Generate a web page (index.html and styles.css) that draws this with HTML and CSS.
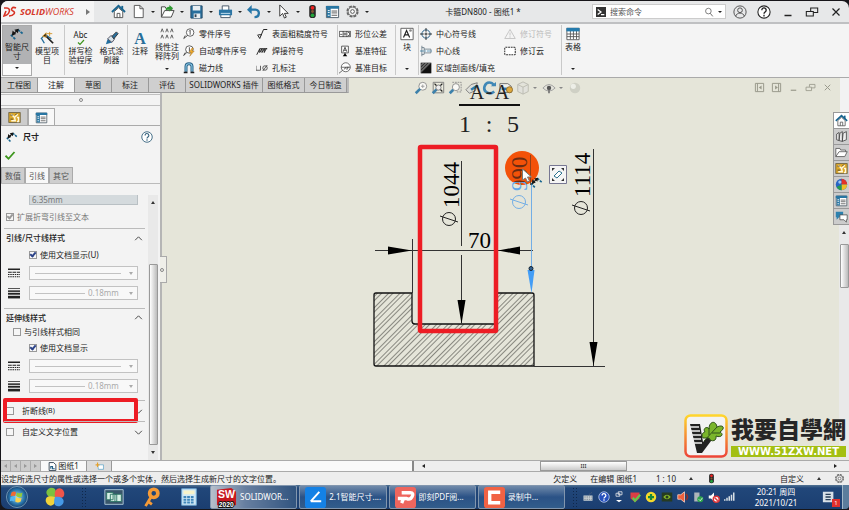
FILE: index.html
```
<!DOCTYPE html>
<html lang="zh-CN">
<head>
<meta charset="utf-8">
<title>卡箍DN800 - 图纸1</title>
<link rel="stylesheet" href="styles.css">
</head>
<body>
<svg class="sprite" aria-hidden="true">
  <symbol id="home" viewBox="0 0 16 16"><path d="M3.5 8v6.500h9V8L8 4z" fill="#fff" stroke="#555"/><path d="M6.500 14.500V10h3v4.500" fill="none" stroke="#555"/><path d="M1 8.500L8 2l7 6.500" fill="none" stroke="#17648f" stroke-width="2"/><path d="M12 2v4" stroke="#17648f" stroke-width="2"/></symbol>
  <symbol id="doc" viewBox="0 0 16 16"><path d="M3.500 1.500h6l3.500 3.500v9.500H3.500z" fill="#fff" stroke="#555"/><path d="M9.500 1.500V5H13" fill="none" stroke="#555"/></symbol>
  <symbol id="open" viewBox="0 0 16 16"><path d="M1.500 14V3h4l1 2h6v3" fill="#f6f6f6" stroke="#444"/><path d="M1.500 14L5 7h10l-3 7z" fill="#fff" stroke="#444"/><path d="M6 7c0-3 2-4 4-4V1l4 3.500L10 8V6C8 6 7 6 6 7z" fill="#2e9a32"/></symbol>
  <symbol id="save" viewBox="0 0 16 16"><path d="M2 2h12v13H2z" fill="#286f9d" stroke="#234b69"/><path d="M4 2h8v5H4zM5 10h7v5H5z" fill="#e8eef2"/><path d="M6 11h2v3H6z" fill="#345"/></symbol>
  <symbol id="print" viewBox="0 0 16 16"><path d="M4.500 2h7v5h-7zM3 11h10v3.500H3z" fill="#fff" stroke="#456"/><path d="M1 6h14v6H1z" fill="#2b75a4"/><path d="M3 10h10" stroke="#c7e2f1"/></symbol>
  <symbol id="undo" viewBox="0 0 16 16"><path d="M3 6h6c5 0 5 8-1 8" fill="none" stroke="#2877a8" stroke-width="2.500"/><path d="M0 6l5-5v10z" fill="#2877a8"/></symbol>
  <symbol id="pointer" viewBox="0 0 16 16"><path d="M4 1v12l3-3 2 5 2-1-2-4h4z" fill="#fff" stroke="#333"/></symbol>
  <symbol id="traffic" viewBox="0 0 16 16"><rect x="4.500" y="1" width="7" height="14" rx="3" fill="#292929"/><circle cx="8" cy="4" r="2" fill="#e22"/><circle cx="8" cy="8" r="1.500" fill="#853"/><circle cx="8" cy="12" r="2" fill="#23a43b"/></symbol>
  <symbol id="list" viewBox="0 0 16 16"><path d="M1.500 2.500h13v12h-13z" fill="#fff" stroke="#4d5c66"/><path d="M1 2h14v3H1zM2 5h4v9H2z" fill="#2876a3"/><path d="M3 7h2M3 9h2M3 12h2" stroke="#fff"/><path d="M7 7.500h6M7 9.500h6M7 12h6" stroke="#555"/></symbol>
  <symbol id="gear" viewBox="0 0 16 16"><circle cx="8" cy="8" r="5.500" fill="none" stroke="#666" stroke-width="2" stroke-dasharray="3 1.300"/><circle cx="8" cy="8" r="4.700" fill="#eee" stroke="#666"/><circle cx="8" cy="8" r="2" fill="#fff" stroke="#555"/></symbol>
  <symbol id="smart" viewBox="0 0 16 16"><path d="M1 9l5 5M9 3l6 5" fill="none" stroke="#17658f" stroke-width="2" stroke-dasharray="3 1"/><path d="M3 9l6-6" stroke="#151515" stroke-width="1.500"/><path d="M2 10l1-6 4 4zM10 2L5 3l4 4z" fill="#151515"/></symbol>
  <symbol id="wand" viewBox="0 0 16 16"><path d="M1 9l5-5 7 5M2 9l3 5" fill="none" stroke="#246e9b" stroke-width="1.500"/><path d="M7 6l8 8" stroke="#222" stroke-width="2"/><path d="M3 6l4-4v5zM11 1v5M8 3h6" fill="#222" stroke="#d39527"/></symbol>
  <symbol id="check" viewBox="0 0 16 16"><path d="M2 9l4 4 8-9" fill="none" stroke="#3d961d" stroke-width="2.400"/></symbol>
  <symbol id="brush" viewBox="0 0 16 16"><path d="M1 15l2-6 5 4z" fill="#226e9e"/><path d="M3 9l4-4 4 4-3 4z" fill="#d8e4ea" stroke="#445"/><path d="M8 6l5-5 2 2-5 6z" fill="#286f9b" stroke="#333"/></symbol>
  <symbol id="pattern" viewBox="0 0 16 16"><path d="M1 6l1.500-4L4 6M6.500 6L8 2l1.500 4M12 6l1.500-4L15 6M1 13l1.500-4L4 13M6.500 13L8 9l1.500 4M12 13l1.500-4 1.500 4" fill="none" stroke="#555"/></symbol>
  <symbol id="balloon" viewBox="0 0 16 16"><circle cx="9.500" cy="6" r="5" fill="#fff" stroke="#333"/><path d="M6 10l-5 4 2-4M9.500 3v6M8 4.500L9.500 3" fill="none" stroke="#222"/></symbol>
  <symbol id="autoballoon" viewBox="0 0 16 16"><circle cx="8.500" cy="6" r="5" fill="#fff" stroke="#333"/><path d="M5 10l-4 4 2-4M8.500 3v6" fill="none" stroke="#222"/><path d="M12 4l-4 6h3l-2 5 6-7h-3l2-4z" fill="#efac2d" stroke="#9c671c" stroke-width=".5"/></symbol>
  <symbol id="magnet" viewBox="0 0 16 16"><path d="M4 13V6c0-5 8-5 8 0v7" fill="none" stroke="#265e83" stroke-width="4"/><path d="M4 12V6c0-5 8-5 8 0v6" fill="none" stroke="#89c6e5" stroke-width="1.500"/><path d="M1 14h5M10 14h5" stroke="#222" stroke-width="2"/></symbol>
  <symbol id="rough" viewBox="0 0 16 16"><path d="M2 9l3 5 5-12h5M3 9h5" fill="none" stroke="#222" stroke-width="1.300"/></symbol>
  <symbol id="weld" viewBox="0 0 16 16"><path d="M1 13l4-8v5l3-5v5l3-5v5l3-6M5 5h10" fill="none" stroke="#222" stroke-width="1.300"/></symbol>
  <symbol id="hole" viewBox="0 0 16 16"><path d="M0 5v6h6V5M9 12l6-8" fill="none" stroke="#333"/><circle cx="12" cy="8" r="3" fill="none" stroke="#333"/></symbol>
  <symbol id="tolerance" viewBox="0 0 16 16"><path d="M.5 4.500h15v7H.5zM5.500 4v8M10.500 4v8M1.500 8.500h3" fill="#fff" stroke="#333"/><circle cx="8" cy="8" r="1.400" fill="none" stroke="#333"/><path d="M12 6h2v4h-2" fill="none" stroke="#333"/></symbol>
  <symbol id="datum" viewBox="0 0 16 16"><path d="M3.500 1.500h9v9h-9z" fill="#fff" stroke="#333"/><path d="M5.500 9L8 3l2.500 6M6.500 7h3M8 10v3" fill="none" stroke="#222"/><path d="M5 15l3-4 3 4z"/></symbol>
  <symbol id="target" viewBox="0 0 16 16"><circle cx="9" cy="7" r="6" fill="#fff" stroke="#444"/><path d="M3 7h12M5 11l-5 4M7 10l1.500-3L10 10M10 7h3M11.500 7v3" fill="none" stroke="#444"/></symbol>
  <symbol id="block" viewBox="0 0 16 16"><path d="M1 1.500h14v13H1z" fill="#fff" stroke="#555"/><path d="M4 12L7.500 4 11 12M5 9h5" fill="none" stroke="#222" stroke-width="1.300"/><circle cx="12" cy="4" r="1.500" fill="#888"/></symbol>
  <symbol id="center" viewBox="0 0 16 16"><circle cx="8" cy="8" r="5.500" fill="none" stroke="#245f87" stroke-width="1.300"/><path d="M8 0v5M8 6v4M8 11v5M0 8h5M6 8h4M11 8h5" stroke="#222" stroke-width="1.200"/></symbol>
  <symbol id="line" viewBox="0 0 16 16"><path d="M2.500 1v14M2.500 3.500h3v9h-3M5.500 5.500h9v5h-9" fill="#fff" stroke="#546875"/><path d="M0 8h16" stroke="#27729c" stroke-dasharray="5 1 2 1"/></symbol>
  <symbol id="fill" viewBox="0 0 16 16"><path d="M1 1h14v14H1z" fill="#777"/><path d="M1 1h14L1 15z" fill="#333"/><path d="M15 1v14H1z" fill="#111"/><path d="M1 5l4-4M1 9l8-8M1 13L13 1" stroke="#bbb"/></symbol>
  <symbol id="warn" viewBox="0 0 16 16"><path d="M8 2L1 14h14zM8 6v4M8 11v2" fill="none" stroke="#c2c2c2" stroke-width="1.200"/></symbol>
  <symbol id="cloud" viewBox="0 0 16 16"><rect x="1" y="3" width="14" height="10" rx="1" fill="#fff" stroke="#333" stroke-width="1.400" stroke-dasharray="2.500 1"/></symbol>
  <symbol id="table" viewBox="0 0 16 16"><path d="M1 1.500h14v13H1zM1 8h14M1 11h14M5 4v10M8.500 4v10M12 4v10" fill="#fff" stroke="#555"/><path d="M.5 1h15v4H.5z" fill="#257bad"/></symbol>
  <symbol id="lens" viewBox="0 0 16 16"><circle cx="10" cy="6" r="4.500" fill="#fafaf6" stroke="#888"/><path d="M7 9l-5 5" stroke="#3d81ab" stroke-width="3"/><path d="M8 6h4M10 4v4" stroke="#999"/></symbol>
  <symbol id="area" viewBox="0 0 16 16"><path d="M5 1.500h10v11H9" fill="none" stroke="#888" stroke-dasharray="2 1"/><circle cx="9" cy="7" r="4" fill="#fafaf6" stroke="#888"/><path d="M6 10l-4 4" stroke="#3d81ab" stroke-width="3"/></symbol>
  <symbol id="fit" viewBox="0 0 16 16"><path d="M2.500 1.500h12v12h-12z" fill="#ededdf" stroke="#777"/><path d="M4 3l3 3M13 3l-3 3M13 12l-3-3" stroke="#222" stroke-width="1.500"/><path d="M7 9l-5 5" stroke="#3d81ab" stroke-width="3"/><circle cx="8.500" cy="7.500" r="3" fill="#eee" stroke="#777"/></symbol>
  <symbol id="cube" viewBox="0 0 16 16"><path d="M2 4l6-3 6 3v8l-6 3-6-3zM2 4l6 3 6-3M8 7v8" fill="#e1e1db" stroke="#b8b8ae"/></symbol>
  <symbol id="plane" viewBox="0 0 16 16"><path d="M1 10l6-6 7-2-2 9-7 3z" fill="#dedfd9" stroke="#777"/><path d="M7 10l6-4" stroke="#2d7bad" stroke-width="3"/></symbol>
  <symbol id="rotate" viewBox="0 0 16 16"><path d="M14 12c-6 5-13 0-11-6s8-5 11-1" fill="none" stroke="#4088b6" stroke-width="3"/><path d="M10 6h6V1z" fill="#4088b6"/></symbol>
  <symbol id="sheetview" viewBox="0 0 16 16"><path d="M1 3h9l4 3v7H1z" fill="#f1f1ea" stroke="#666"/><path d="M3 9h6" stroke="#2d7bad" stroke-width="3"/><circle cx="12" cy="10" r="3.500" fill="#dfa83c" stroke="#8a6a2b"/></symbol>
  <symbol id="eye" viewBox="0 0 16 16"><path d="M1 8q7-8 14 0-7 7-14 0z" fill="#e4e4dc" stroke="#999"/><circle cx="8" cy="8" r="2.500" fill="#555"/><path d="M8 10v4" stroke="#777" stroke-width="2"/></symbol>
  <symbol id="ball" viewBox="0 0 16 16"><circle cx="8" cy="8" r="6" fill="#cfd0c5"/><circle cx="6" cy="6" r="3" fill="#edeee7"/></symbol>
  <symbol id="feature" viewBox="0 0 16 16"><rect x="1" y="2" width="14" height="12" fill="#dda92c" stroke="#655836"/><path d="M4 4l4 4 4-4M4 12h5L8 8M11 8h2v5h-2" fill="none" stroke="#fff8dd" stroke-width="1.700"/><path d="M3 5h3M3 10h3M9 5l2-2" stroke="#443a25"/></symbol>
  <symbol id="help" viewBox="0 0 16 16"><circle cx="8" cy="8" r="7" fill="#fff" stroke="currentColor" stroke-width="1.200"/><path d="M5.500 6c0-4 5-3 5 0 0 2-2.500 2-2.500 4M8 11v2" fill="none" stroke="currentColor" stroke-width="1.500"/></symbol>
  <symbol id="user" viewBox="0 0 16 16"><circle cx="8" cy="8" r="7" fill="none" stroke="#444"/><circle cx="8" cy="6" r="2.700" fill="none" stroke="#444"/><path d="M3 13c1-5 9-5 10 0" fill="none" stroke="#444"/></symbol>
  <symbol id="min" viewBox="0 0 16 16"><path d="M4 12h8" stroke="currentColor" stroke-width="1.700"/></symbol>
  <symbol id="restore" viewBox="0 0 16 16"><path d="M1.500 7.500h8v5h-8zM6.500 7V3.500h8v5H10" fill="none" stroke="currentColor" stroke-width="1.200"/></symbol>
  <symbol id="close" viewBox="0 0 16 16"><path d="M4 4l8 8M12 4l-8 8" stroke="currentColor" stroke-width="1.400"/></symbol>
  <symbol id="paneleft" viewBox="0 0 16 16"><path d="M2 2h12v12H2zM5 2v12" fill="none" stroke="currentColor" stroke-width="1.400"/><path d="M11 5v6L7 8z" fill="currentColor"/></symbol>
  <symbol id="paneright" viewBox="0 0 16 16"><path d="M2 2h12v12H2zM11 2v12" fill="none" stroke="currentColor" stroke-width="1.400"/><path d="M6 5v6l4-3z" fill="currentColor"/></symbol>
  <symbol id="search" viewBox="0 0 16 16"><circle cx="7" cy="6.500" r="4.500" fill="none" stroke="#666" stroke-width="1.300"/><path d="M10 10l4 5" stroke="#666" stroke-width="1.500"/></symbol>
  <symbol id="up" viewBox="0 0 16 16"><path d="M2 11l6-6 6 6" fill="none" stroke="#444" stroke-width="1.700"/></symbol>
  <symbol id="down" viewBox="0 0 16 16"><path d="M2 5l6 6 6-6" fill="none" stroke="#444" stroke-width="1.700"/></symbol>
  <symbol id="linestyle" viewBox="0 0 16 16"><path d="M0 3h16" stroke="#222" stroke-width="2"/><path d="M0 7h16" stroke="#222" stroke-width="1.500" stroke-dasharray="5 1"/><path d="M0 10h16M0 13h16" stroke="#222" stroke-width="1.500" stroke-dasharray="2 1"/></symbol>
  <symbol id="thickness" viewBox="0 0 16 16"><path d="M0 2h16" stroke="#222"/><path d="M0 5.500h16" stroke="#222" stroke-width="2"/><path d="M0 9h16" stroke="#222" stroke-width="2.500"/><path d="M0 13.500h16" stroke="#222" stroke-width="3.500"/></symbol>
  <symbol id="books" viewBox="0 0 16 16"><path d="M2 5l3-2v10l-3-1zM6 4l3-2v12l-4-1zM10 4l4-2v10l-5 2z" fill="#eee" stroke="#444"/></symbol>
  <symbol id="folder" viewBox="0 0 16 16"><path d="M1 13V3h5l1 2h6v2M1 13l4-6h10l-3 6z" fill="#fff" stroke="#555"/></symbol>
  <symbol id="colors" viewBox="0 0 16 16"><circle cx="8" cy="8" r="7" fill="#2764c4"/><path d="M8 8V1a7 7 0 0 1 7 7z" fill="#e43229"/><path d="M8 8h7a7 7 0 0 1-7 7z" fill="#eebf29"/><path d="M8 8v7a7 7 0 0 1-6-4z" fill="#269b4e"/><circle cx="6" cy="5" r="2" fill="#9dc6f2"/></symbol>
  <symbol id="chat" viewBox="0 0 16 16"><path d="M1 2h9v7H5l-3 3V9H1z" fill="#2c81ae"/><path d="M6 6h9v6h-1v3l-3-3H6z" fill="#fff" stroke="#555"/></symbol>
  <symbol id="sheet" viewBox="0 0 16 16"><path d="M2 1h8l4 4v10H2z" fill="#fff" stroke="#234" stroke-width="1.500"/><path d="M5 12V8h3v4h4" fill="none" stroke="#246085" stroke-width="2"/></symbol>
  <symbol id="addsheet" viewBox="0 0 16 16"><path d="M5 5h10v8H6z" fill="#fff" stroke="#368fbd"/><path d="M1 5h7M4.500 1v8" stroke="#e6a12c" stroke-width="2"/></symbol>
  <symbol id="speaker" viewBox="0 0 16 16"><path d="M1 5h4l5-4v14l-5-4H1z" fill="#ef603c" stroke="#ffd9c9"/><path d="M12 4q4 4 0 8" fill="none" stroke="#982d22" stroke-width="2"/></symbol>
</svg>

<div class="app">
<header class="titlebar">
  <div class="brand">
    <svg viewBox="0 0 14 12" aria-hidden="true"><path d="M1 2h3c4 0 3 7-3 8l2-5M13 2C9 0 7 4 10 5s1 5-4 5" fill="none" stroke="#d83224" stroke-width="1.600"/></svg>
    <span class="wordmark"><b>SOLID</b>WORKS</span><i class="caret-right"></i>
  </div>
  <nav class="quick" aria-label="快速访问">
    <button aria-label="主页"><svg><use href="#home"/></svg></button>
    <button class="has-caret" aria-label="新建"><svg><use href="#doc"/></svg></button>
    <button class="has-caret" aria-label="打开"><svg><use href="#open"/></svg></button>
    <button class="has-caret" aria-label="保存"><svg><use href="#save"/></svg></button>
    <button class="has-caret" aria-label="打印"><svg><use href="#print"/></svg></button>
    <button class="has-caret" aria-label="撤销"><svg><use href="#undo"/></svg></button>
    <button class="has-caret" aria-label="选择"><svg><use href="#pointer"/></svg></button>
    <button aria-label="重建"><svg><use href="#traffic"/></svg></button>
    <button aria-label="文件属性"><svg><use href="#list"/></svg></button>
    <button class="has-caret" aria-label="选项"><svg><use href="#gear"/></svg></button>
  </nav>
  <h1>卡箍DN800 - 图纸1 *</h1>
  <div class="search">
    <svg viewBox="0 0 12 12" aria-hidden="true"><path d="M0 0h12v12H0z" fill="#333"/><path d="M2 3l4 3-4 3M6 9h4" fill="none" stroke="#fff" stroke-width="1.500"/></svg>
    <input type="search" aria-label="搜索命令" placeholder="搜索命令">
    <svg aria-hidden="true"><use href="#search"/></svg><i class="caret"></i>
  </div>
  <div class="window-buttons">
    <button aria-label="用户"><svg><use href="#user"/></svg></button>
    <button aria-label="帮助"><svg><use href="#help"/></svg></button>
    <button aria-label="最小化"><svg><use href="#min"/></svg></button>
    <button aria-label="还原"><svg><use href="#restore"/></svg></button>
    <button aria-label="关闭"><svg><use href="#close"/></svg></button>
  </div>
</header>

<section class="ribbon" aria-label="注解工具">
  <div class="group g-dim">
    <button class="big selected"><svg><use href="#smart"/></svg><span>智能尺<br>寸</span><i class="caret"></i></button>
    <button class="big low"><svg><use href="#wand"/></svg><span>模型项<br>目</span></button>
  </div>
  <div class="group g-check">
    <button class="big low"><span class="abc">Abc</span><svg class="short"><use href="#check"/></svg><span>拼写检<br>验程序</span></button>
    <button class="big low"><svg><use href="#brush"/></svg><span>格式涂<br>刷器</span></button>
  </div>
  <div class="group g-note">
    <button class="big low note"><b class="letter">A</b><span>注释</span></button>
    <button class="big linear"><svg><use href="#pattern"/></svg><span>线性注<br>释阵列</span><i class="caret"></i></button>
    <div class="stack s-balloon">
      <button><svg><use href="#balloon"/></svg>零件序号</button>
      <button><svg><use href="#autoballoon"/></svg>自动零件序号</button>
      <button><svg><use href="#magnet"/></svg>磁力线</button>
    </div>
    <div class="stack">
      <button><svg><use href="#rough"/></svg>表面粗糙度符号</button>
      <button><svg><use href="#weld"/></svg>焊接符号</button>
      <button><svg><use href="#hole"/></svg>孔标注</button>
    </div>
  </div>
  <div class="group g-tol">
    <div class="stack">
      <button><svg><use href="#tolerance"/></svg>形位公差</button>
      <button><svg><use href="#datum"/></svg>基准特征</button>
      <button><svg><use href="#target"/></svg>基准目标</button>
    </div>
  </div>
  <div class="group g-block"><button class="big"><svg><use href="#block"/></svg><span>块</span><i class="caret"></i></button></div>
  <div class="group g-center">
    <div class="stack s-center">
      <button><svg><use href="#center"/></svg>中心符号线</button>
      <button><svg><use href="#line"/></svg>中心线</button>
      <button><svg><use href="#fill"/></svg>区域剖面线/填充</button>
    </div>
    <div class="stack">
      <button disabled><svg><use href="#warn"/></svg>修订符号</button>
      <button><svg><use href="#cloud"/></svg>修订云</button>
    </div>
  </div>
  <div class="group g-table"><button class="big"><svg><use href="#table"/></svg><span>表格</span><i class="caret"></i></button></div>
</section>

<main class="workspace">
  <nav class="command-tabs" aria-label="命令管理器">
    <button>工程图</button><button class="active">注解</button><button>草图</button><button>标注</button><button>评估</button><button class="wide">SOLIDWORKS 插件</button><button class="mid">图纸格式</button><button class="mid">今日制造</button>
  </nav>

  <aside class="panel">
    <div class="grip"><i class="dot"></i></div>
    <div class="manager-tabs">
      <button aria-label="特征"><svg><use href="#feature"/></svg></button>
      <button class="active" aria-label="属性"><svg><use href="#list"/></svg></button>
    </div>
    <div class="panel-title"><svg><use href="#smart"/></svg><h2>尺寸</h2><button class="help" aria-label="帮助"><svg><use href="#help"/></svg></button></div>
    <button class="accept" aria-label="确定"><svg><use href="#check"/></svg></button>
    <div class="subtabs"><button>数值</button><button class="active">引线</button><button>其它</button></div>
    <div class="scroll-area">
      <form class="props">
        <input class="length" type="text" aria-label="长度" value="6.35mm" disabled>
        <label class="tick extend"><input type="checkbox" checked disabled>扩展折弯引线至文本</label>
        <fieldset aria-label="引线/尺寸线样式">
          <div class="section"><b>引线/尺寸线样式</b><svg><use href="#up"/></svg></div>
          <label class="tick deep"><input type="checkbox" checked>使用文档显示(U)</label>
          <div class="choice"><svg><use href="#linestyle"/></svg><span class="drop"><select aria-label="引线线型" disabled><option></option></select></span></div>
          <div class="choice"><svg><use href="#thickness"/></svg><span class="drop half"><select aria-label="引线粗细" disabled><option>0.18mm</option></select></span></div>
        </fieldset>
        <fieldset aria-label="延伸线样式">
          <div class="section"><b>延伸线样式</b><svg><use href="#up"/></svg></div>
          <label class="tick"><input type="checkbox">与引线样式相同</label>
          <label class="tick deep"><input type="checkbox" checked>使用文档显示</label>
          <div class="choice"><svg><use href="#linestyle"/></svg><span class="drop"><select aria-label="延伸线线型" disabled><option></option></select></span></div>
          <div class="choice"><svg><use href="#thickness"/></svg><span class="drop half"><select aria-label="延伸线粗细" disabled><option>0.18mm</option></select></span></div>
        </fieldset>
        <div class="fold marked"><label><input type="checkbox">折断线<small>(B)</small></label><svg><use href="#down"/></svg></div>
        <div class="fold"><label><input type="checkbox">自定义文字位置</label><svg><use href="#down"/></svg></div>
      </form>
      <div class="vbar"><i class="tri-up"></i><span class="thumb"></span><i class="tri-down"></i></div>
    </div>
    <span class="splitter"><i class="dot"></i></span>
  </aside>

  <section class="canvas">
    <svg class="drawing" viewBox="161 78 678 382" preserveAspectRatio="xMinYMin meet" role="img" aria-label="剖面图 A-A">
      <defs>
        <pattern id="hatch" width="8" height="8" patternUnits="userSpaceOnUse" patternTransform="rotate(45)"><path d="M1.500 0v8M4.500 0v8" stroke="#4a4a45" stroke-width=".6"/></pattern>
        <linearGradient id="ink" gradientUnits="userSpaceOnUse" x1="0" x2="36" y1="0" y2="0"><stop offset=".25" stop-color="#5fa5ea"/><stop offset=".25" stop-color="#6b2c12"/></linearGradient>
      </defs>
      <g class="caption"><text class="name" x="476" y="99">A</text><text class="name" x="488" y="98">-</text><text class="name" x="501" y="99">A</text><text x="464" y="132">1</text><text x="488" y="132">:</text><text x="512" y="132">5</text></g>
      <path d="M458 105h61" stroke="#111" stroke-width="2"/>
      <path d="M373 295q0-2 2-2h36v28q0 3 3 3h81v-31h36q2 0 2 2v71H375q-2 0-2-2z" fill="url(#hatch)" stroke="#111" stroke-width="1.300"/>
      <g stroke="#333" fill="none"><path d="M411.500 239v54M374 250.500h158M460.500 161v85M460.500 255v68M592.500 149v217M533 366.500h71"/></g>
      <path d="M411 250.500l-24-4v8zM497 250.500l22-4v8zM460.500 324l-4-24h8zM592.500 366l-4-24h8z"/>
      <circle cx="521" cy="168" r="17" fill="#f35209"/>
      <path d="M529.500 155v30" stroke="#8f4218"/><path d="M530.500 185v84" stroke="#73aee5"/><path d="M530.500 293l-4-23h7z" fill="#439df6"/><circle cx="530" cy="268.500" r="2" fill="#356493" stroke="#123"/>
      <g class="dimension"><text transform="translate(458 208) rotate(-90)">1044</text><text x="467" y="248">70</text><text transform="translate(589 197) rotate(-90)">1114</text><text fill="url(#ink)" transform="translate(526 191) rotate(-90)">990</text></g>
      <g fill="none" stroke="#222"><circle cx="448" cy="219" r="6.500"/><path d="M439 216l18 6"/><circle cx="580" cy="208" r="6.500"/><path d="M571 205l18 6"/></g>
      <g fill="none" stroke="#73aee5"><circle cx="518" cy="202" r="6.500"/><path d="M509 199l18 6"/></g>
      <rect x="419" y="147" width="76" height="184" rx="1" fill="none" stroke="#ed1c24" stroke-width="4.500"/>
      <path d="M521.500 169v11l3-2 2 4 2-1-2-4h4z" fill="#fff" stroke="#777"/>
      <use href="#smart" x="529" y="176" width="13" height="13"/>
      <g><path d="M548.500 165.500h17v18h-17z" fill="#f5f5f5" stroke="#777792"/><path d="M551 168h3l-3 3zM563 168h-3l3 3zM551 181h3l-3-3zM563 181h-3l3-3z" fill="#333"/><path d="M553 176l5-5 3 2-5 5z" fill="#fff" stroke="#2a718f"/></g>
    </svg>
    <div class="view-tools">
      <button aria-label="整屏显示"><svg><use href="#lens"/></svg></button><button aria-label="适合窗口"><svg><use href="#fit"/></svg></button><button aria-label="局部放大"><svg><use href="#area"/></svg></button><button aria-label="剖面"><svg><use href="#plane"/></svg></button><button aria-label="旋转"><svg><use href="#rotate"/></svg></button><button aria-label="三维工程图"><svg><use href="#sheetview"/></svg></button><button class="has-caret" aria-label="显示样式"><svg><use href="#cube"/></svg></button><button class="has-caret" aria-label="隐藏"><svg><use href="#eye"/></svg></button><button aria-label="外观"><svg><use href="#ball"/></svg></button>
    </div>
    <div class="doc-tools">
      <button aria-label="左窗格"><svg><use href="#paneleft"/></svg></button><button aria-label="右窗格"><svg><use href="#paneright"/></svg></button><button aria-label="最小化文档"><svg><use href="#min"/></svg></button><button aria-label="还原文档"><svg><use href="#restore"/></svg></button><button aria-label="关闭文档"><svg><use href="#close"/></svg></button>
    </div>
    <div class="watermark">
      <svg viewBox="0 0 44 44" aria-hidden="true"><defs><linearGradient id="rim" x2="0" y2="1"><stop stop-color="#ffd52d"/><stop offset="1" stop-color="#ed4638"/></linearGradient></defs><rect x="1.500" y="1.500" width="41" height="41" rx="5" fill="#f3f3f3" stroke="url(#rim)" stroke-width="2.500"/><path d="M6 10h10l3 18 8-8 3 3-12 16h-5z" fill="#222"/><path d="M6 13h9M7 17h9M7 21h10M8 25h9M9 29h9" stroke="#eee" stroke-width="1.500"/><path d="M19 24c-3-5 2-6 2-6-3-4 3-6 4-3 0-8 7-9 8-2 6-3 9 1 3 5 5 3 0 6-4 4 1 6-6 6-7 2z" fill="#7ab52b" stroke="#31521b"/><path d="M20 27l13-14M25 21V14M28 19h8" stroke="#31521b"/></svg>
      <div><strong>我要自學網</strong><em>WWW.51ZXW.NET</em></div>
    </div>
  </section>

  <aside class="rail">
    <div class="task-pane"><button class="active" aria-label="资源"><svg><use href="#home"/></svg></button><button aria-label="设计库"><svg><use href="#books"/></svg></button><button aria-label="文件"><svg><use href="#folder"/></svg></button><button aria-label="视图调色板"><svg><use href="#feature"/></svg></button><button aria-label="外观"><svg><use href="#colors"/></svg></button><button aria-label="自定义属性"><svg><use href="#list"/></svg></button><button aria-label="论坛"><svg><use href="#chat"/></svg></button></div>
    <div class="vbar canvas-bar"><i class="tri-up"></i><span class="thumb"></span></div>
  </aside>
</main>

<div class="sheets">
  <div class="sheet-nav"><button aria-label="第一张"><i class="tri-left"></i></button><button aria-label="上一张"><i class="tri-left"></i></button><button aria-label="下一张"><i class="tri-right"></i></button><button aria-label="最后一张"><i class="tri-right"></i></button></div>
  <button class="sheet active"><svg><use href="#sheet"/></svg>图纸1</button>
  <button class="sheet" aria-label="添加图纸"><svg><use href="#addsheet"/></svg></button>
  <span class="sheet-space"></span>
  <div class="hbar"><i class="tri-left"></i><span class="thumb">III</span><i class="tri-right"></i></div>
</div>
<footer class="status">
  <p>设定所选尺寸的属性或选择一个或多个实体，然后选择生成新尺寸的文字位置。</p>
  <span>欠定义</span><span>在编辑 图纸1</span><span class="scale">1 : 10</span><i class="tri-up"></i><svg><use href="#traffic"/></svg><span class="custom">自定义</span><i class="tri-up"></i><svg><use href="#gear"/></svg>
</footer>

<nav class="taskbar" aria-label="任务栏">
  <div class="launch">
    <button aria-label="开始"><svg viewBox="0 0 24 24"><defs><radialGradient id="orb"><stop stop-color="#a8e3f8"/><stop offset=".7" stop-color="#2874a9"/><stop offset="1" stop-color="#163f70"/></radialGradient></defs><circle cx="12" cy="12" r="11.500" fill="url(#orb)" stroke="#739bb8"/><path d="M6 7q3-2 5 0l-1 4q-2-1-5 0z" fill="#f16a31"/><path d="M12 7q3 2 6 0l-1 5q-3 1-6-1z" fill="#91ca3c"/><path d="M5 12q3-1 5 0l-1 5q-3-2-5 0z" fill="#55b7f3"/><path d="M11 12q3 2 6 1l-1 4q-3 2-6 0z" fill="#ffd34b"/></svg></button>
    <button aria-label="浏览器"><svg viewBox="0 0 24 24"><path d="M12 12C1 14 0 4 7 2c6-1 7 4 5 10z" fill="#7cc13f"/><path d="M12 12C10 1 20 0 22 7c1 6-4 7-10 5z" fill="#ef554a"/><path d="M12 12c2 11-8 12-10 5-1-6 4-7 10-5z" fill="#f0d23a"/><path d="M12 12c11-2 12 8 5 10-6 1-7-4-5-10z" fill="#4699e6"/></svg></button>
    <i class="dots"></i>
    <button aria-label="切换窗口"><svg viewBox="0 0 24 24"><path d="M2 4h20v16H2z" fill="#39566b" stroke="#adc8d8"/><path d="M4 7h7v8H4zM8 9h7v8H8zM13 9h7v8h-7z" fill="#d7f0e6" stroke="#2c7465"/></svg></button>
    <button aria-label="密钥"><svg viewBox="0 0 24 24"><circle cx="15" cy="8" r="4.500" fill="none" stroke="#f59a36" stroke-width="4"/><path d="M12 12L6 22M9 17l4 3" fill="none" stroke="#f59a36" stroke-width="3"/></svg></button>
    <button aria-label="计算器"><svg viewBox="0 0 24 24"><path d="M4 3h16v18H4z" fill="#cfe8f6" stroke="#69a5d1"/><path d="M6 5h12v4H6z" fill="#f7f3c9"/><path d="M6 12h12M6 15h12M6 18h12" stroke="#3e86ba" stroke-width="2" stroke-dasharray="3 1"/></svg></button>
  </div>
  <div class="tasks">
    <button class="light"><svg viewBox="0 0 22 22"><path d="M1 3l15-2 5 4v14H1z" fill="#c71920"/><text x="2" y="12" class="sw">SW</text><text x="3" y="21" class="year">2020</text></svg><span>SOLIDWOR...</span></button>
    <button><svg viewBox="0 0 22 22"><rect width="22" height="22" rx="3" fill="#1481e5"/><path d="M6 15L15 5M6 15h11" stroke="#fff" stroke-width="2"/></svg><span>2.1智能尺寸....</span></button>
    <button><svg viewBox="0 0 22 22"><rect width="22" height="22" rx="3" fill="#ee665e"/><path d="M7 6h9q4 0 2 4t-6 2H9l-2 5M3 12h7" fill="none" stroke="#fff" stroke-width="3.500"/></svg><span>即刻PDF阅...</span></button>
    <button><svg viewBox="0 0 22 22"><rect width="22" height="22" rx="3" fill="#f16244"/><path d="M17 5.500H6v11h11" fill="none" stroke="#fff" stroke-width="3.500"/></svg><span>录制中...</span></button>
  </div>
  <div class="tray"><i class="dots"></i>
    <svg viewBox="0 0 16 16"><path d="M2 6h12v7H2z" fill="#ccd3d5"/><path d="M3 8h10M3 11h10M9 5l4-3" stroke="#596775" stroke-dasharray="2 1"/></svg>
    <svg viewBox="0 0 16 16"><circle cx="8" cy="8" r="7" fill="#2550bd" stroke="#c5d4ee"/><path d="M5.500 6c0-4 5-3 5 0 0 2-2.500 2-2.500 4M8 11v2" fill="none" stroke="#fff" stroke-width="1.700"/></svg>
    <svg viewBox="0 0 16 16"><path d="M7 1h5v4H7zM4 3h5v4H4z" fill="none" stroke="#eee"/><path d="M4 12h8l-4 3z" fill="#fff"/></svg>
    <svg viewBox="0 0 16 16"><path d="M2 2h12v8l-6 5-6-5z" fill="#da3e45"/><path d="M5 9l3 4 7-8" fill="none" stroke="#60c84c" stroke-width="3"/></svg>
    <svg viewBox="0 0 16 16"><circle cx="8" cy="8" r="7" fill="#f4d92c"/><path d="M8 4v8M4 8h8" stroke="#16883b" stroke-width="3"/></svg>
    <svg viewBox="0 0 16 16"><path d="M1 2h14v12H1z" fill="#263b22"/><path d="M3 8q5-6 10 0-5 6-10 0z" fill="#87b929"/><circle cx="8" cy="8" r="2" fill="#263b22"/></svg>
    <svg><use href="#speaker"/></svg>
    <svg viewBox="0 0 16 16"><path d="M3 2h7v12H3z" fill="#aeb5b9"/><circle cx="11" cy="11" r="4" fill="#2da44c"/><path d="M9 11l2 2 3-4" fill="none" stroke="#fff"/></svg>
    <svg viewBox="0 0 16 16"><path d="M1 6h3l4-4v12l-4-4H1z" fill="#fff"/><circle cx="11" cy="11" r="4" fill="#fff" stroke="#dc3639" stroke-width="2"/><path d="M9 9l4 4" stroke="#dc3639" stroke-width="2"/></svg>
    <svg viewBox="0 0 16 16"><path d="M1 13v-2M4 13v-4M7 13V7M10 13V5M13 13V2" stroke="#d7dfe5" stroke-width="2"/></svg>
  </div>
  <time>20:21 周四<br>2021/10/21</time>
  <button class="notice" aria-label="通知"><svg viewBox="0 0 16 16"><path d="M1 2h12v12H1z" fill="#d8e0e7"/><path d="M4 5h6M4 8h6M4 11h6" stroke="#2a3f58" stroke-width="1.500"/></svg><span>1</span></button>
  <button class="desktop" aria-label="显示桌面"></button>
</nav>
</div>
</body>
</html>
```
FILE: styles.css
```
*, ::before, ::after { box-sizing: border-box; }
body { margin: 0; background: #17161a; font: 8px/10px "Noto Sans", "Noto Sans CJK SC", sans-serif; color: #222; }
button, input, select { font: inherit; color: inherit; margin: 0; padding: 0; border: 0; border-radius: 0; background: none; }
button { display: flex; align-items: center; }
svg { display: block; flex: none; width: 14px; height: 14px; }
h1, h2, p { margin: 0; font-weight: normal; }
.sprite { position: absolute; width: 0; height: 0; }
.app { min-height: 100vh; padding: 1px 0 1px 1px; display: flex; flex-direction: column; }
.caret, .has-caret::after { content: ""; flex: none; border: 2px solid transparent; border-top-color: #222; border-bottom: 0; }
.dot { width: 4px; height: 4px; border: 1px solid #888; border-radius: 50%; }
.tri-up, .tri-down, .tri-left, .tri-right { flex: none; width: 0; height: 0; border: 2px solid transparent; }
.tri-up { border-top: 0; border-bottom: 3px solid #333; }
.tri-down { border-bottom: 0; border-top: 3px solid #333; }
.tri-left { border-left: 0; border-right: 3px solid currentColor; }
.tri-right { border-right: 0; border-left: 3px solid currentColor; }

/* title bar */
.titlebar { height: 23px; flex: none; display: flex; align-items: center; background: #e7e8e9; border-bottom: 2px solid #bfc0c2; border-radius: 7px 7px 0 0; }
.brand { width: 93px; height: 100%; display: flex; align-items: center; gap: 3px; padding-left: 2px; background: #f5f5f5; border-top-left-radius: 7px; }
.wordmark { color: #d5392c; font: italic 9px/12px "Open Sans", sans-serif; flex: 1; }
.caret-right { border: 3px solid transparent; border-left: 4px solid #777; border-right: 0; margin-right: 4px; }
.quick { display: flex; margin-left: 17px; }
.quick button { width: 20px; }
.quick svg { width: 15px; height: 15px; }
.quick .has-caret { width: 29px; gap: 5px; }
.titlebar h1 { flex: 1; text-align: center; font-size: 8px; }
.search { width: 134px; height: 15px; display: flex; align-items: center; gap: 4px; padding: 0 3px; background: #fff; border: 1px solid #ccc; }
.search svg { width: 10px; height: 10px; }
.search input { flex: 1; min-width: 0; outline: 0; }
.search input::placeholder { color: #555; opacity: 1; }
.window-buttons { display: flex; gap: 10px; padding: 0 6px 0 7px; color: #222; }

/* ribbon */
.ribbon { height: 54px; flex: none; display: flex; padding: 1px 0 2px 1px; background: #f4f4f4; border-bottom: 1px solid #aaa; }
.group { display: flex; border-right: 1px solid #c9c9c9; }
.g-dim { width: 63px; }
.g-check { width: 63px; }
.g-note { width: 210px; }
.g-tol { width: 58px; padding-left: 1px; }
.g-block { width: 23px; }
.g-center { width: 143px; }
.g-table { border: 0; width: 23px; }
.big { width: 30px; height: 51px; flex-direction: column; padding-top: 2px; line-height: 9px; text-align: center; position: relative; white-space: nowrap; }
.big > .caret { margin-top: auto; margin-bottom: 6px; }
.big svg { margin-bottom: 1px; }
.big.low { padding-top: 6px; }
.big.selected { background: linear-gradient(#b1b2b4 38px, #fbfbfb 38px); border: 1px solid #aaa; padding-top: 1px; }
.g-block .big, .g-table .big { width: 22px; }
.g-check .big { width: 31px; }
.big .abc { font-size: 8px; line-height: 7px; }
.big .short { height: 8px; margin-bottom: 0; }
.big.note { width: 24px; }
.letter { font: bold 16px/15px "Liberation Serif", serif; color: #286f9a; }
.stack { display: grid; grid-template-rows: repeat(3, 17px); align-content: start; }
.stack button { gap: 4px; white-space: nowrap; }
.stack svg { width: 12px; height: 12px; }
.stack button:disabled { color: #bbb; }
.s-balloon { width: 73px; margin-left: 1px; }
.s-center { width: 84px; margin-left: 1px; }

/* work area */
.workspace { flex: 1; display: flex; position: relative; background: #e5e5d9; min-height: 0; }
.command-tabs { position: absolute; z-index: 2; top: 0; left: 0; height: 15px; display: flex; border-bottom: 1px solid #999; border-right: 2px solid #bbb; }
.command-tabs button { width: 37px; justify-content: center; background: #cfcfcf; border-right: 1px solid #999; white-space: nowrap; }
.command-tabs .active, .manager-tabs .active, .subtabs .active { background: #f8f8f8; }
.command-tabs .wide { width: 77px; }
.command-tabs .mid { width: 42px; }
.panel { width: 161px; flex: none; padding-top: 16px; background: #f3f3f3; border-right: 2px solid #b5b5b5; position: relative; display: flex; flex-direction: column; }
.grip { height: 12px; border: solid #c0c0c0; border-width: 1px 0; display: flex; align-items: center; justify-content: center; }
.manager-tabs { height: 20px; display: flex; align-items: end; border-bottom: 1px solid #aaa; }
.manager-tabs button { width: 27px; height: 17px; justify-content: center; background: #ccc; border: 1px solid #aaa; border-bottom: 0; }
.manager-tabs svg { width: 13px; height: 13px; }
.panel-title { height: 21px; display: flex; align-items: center; padding: 0 7px 0 5px; gap: 5px; }
.panel-title h2 { font: bold 8px/12px "Noto Sans CJK SC", sans-serif; flex: 1; }
.panel-title svg { width: 12px; height: 12px; }
.help { color: #37637e; }
.accept { height: 16px; padding-left: 3px; width: 20px; }
.accept svg { width: 12px; }
.subtabs { height: 21px; display: flex; align-items: end; border-bottom: 1px solid #bbb; }
.subtabs button { width: 24px; height: 16px; justify-content: center; background: #cecece; border: 1px solid #aaa; border-bottom: 0; color: #555; }
.scroll-area { flex: 1; display: flex; padding: 11px 2px 0 3px; justify-content: space-between; }
.props { width: 141px; }
.props input[type=checkbox] { appearance: none; width: 8px; height: 8px; border: 1px solid #999; background: #f6f6f6; display: grid; place-content: center; flex: none; }
.props input[type=checkbox]:checked::before { content: ""; width: 6px; height: 4px; margin-top: -2px; border: solid #2c4388; border-width: 0 0 2px 2px; transform: rotate(-50deg); }
.props input[type=checkbox]:disabled:checked::before { border-color: #999; }
.length { display: block; width: 109px; height: 10px; margin-left: 25px; line-height: 8px; background: #d4dadd; border: 1px solid #b9c0c4; border-top: 0; }
.props .length { padding-left: 2px; color: #777; }
.tick { height: 16px; display: flex; align-items: center; gap: 3px; margin-left: 9px; white-space: nowrap; }
.tick.deep { margin-left: 25px; }
.tick.extend { height: 23px; margin-left: 2px; color: #777; }
fieldset { min-width: 0; margin: 0; padding: 0; border: 0; border-top: 1px solid #bbb; height: 80px; }
fieldset + fieldset { height: 92px; }
.section { height: 18px; display: flex; align-items: center; justify-content: space-between; padding: 0 2px; }
.section b { font-weight: 500; }
.section svg, .fold svg { width: 9px; height: 9px; }
fieldset + fieldset .section { height: 15px; padding-top: 2px; }
.choice { height: 20px; display: flex; align-items: center; gap: 9px; padding-left: 4px; }
.choice > svg { width: 12px; height: 12px; }
.drop { position: relative; width: 109px; height: 14px; border: 1px solid #c2c2c2; background: #f8f8f8; display: flex; }
.drop select { width: 100%; appearance: none; padding-left: 58px; color: #aaa; opacity: 1; }
.drop::before { content: ""; position: absolute; left: 5px; right: 16px; top: 6px; border-top: 1px solid #c2c2c2; }
.drop.half::before { right: 52px; }
.drop::after { content: ""; position: absolute; right: 4px; top: 5px; border: 2px solid transparent; border-top: 3px solid #aaa; border-bottom: 0; }
.fold { height: 21px; border-top: 1px solid #bbb; display: flex; align-items: center; justify-content: space-between; padding: 0 2px; position: relative; }
.fold label { display: flex; align-items: center; gap: 8px; }
.fold small { font-size: 7px; margin-left: -8px; }
.marked::after { content: ""; position: absolute; left: -1px; top: -3px; width: 135px; height: 25px; border: 4px solid #ed1c24; border-radius: 2px; }
.vbar { width: 10px; display: flex; flex-direction: column; align-items: center; background: #e9e9e9; padding: 6px 0; }
.vbar .thumb { width: 9px; border: 1px solid #999; border-radius: 1px; background: linear-gradient(90deg, #fff, #bbb); }
.scroll-area .thumb { flex: 1; margin: 60px 0 6px; }
.splitter { position: absolute; right: -7px; top: 178px; width: 7px; height: 27px; display: flex; align-items: center; border: 1px solid #aaa; border-left: 0; background: #efefe9; }

/* drawing sheet */
.canvas { flex: 1; min-width: 0; position: relative; }
.drawing { position: absolute; z-index: 1; inset: 0; width: 100%; height: 100%; pointer-events: none; }
.caption { font: 24px "Liberation Serif", serif; text-anchor: middle; fill: #222; }
.name { font-size: 20px; }
.dimension { font: 23px "Liberation Serif", serif; }
.view-tools { position: absolute; top: 3px; left: 252px; display: flex; gap: 3px; }
.view-tools .has-caret { gap: 3px; padding-right: 2px; }
.view-tools .has-caret::after { border-top-color: #888; }
.doc-tools { position: absolute; top: 4px; right: 7px; display: flex; gap: 6px; color: #98988a; }
.doc-tools svg { width: 11px; height: 11px; }
.watermark { position: absolute; z-index: 2; right: -6px; bottom: 2px; display: flex; align-items: center; gap: 3px; }
.watermark > svg { width: 44px; height: 44px; }
.watermark strong { display: block; font: 900 23px/27px "Noto Sans CJK TC", sans-serif; color: #262626; white-space: nowrap; }
.watermark em { display: block; margin-top: 4px; background: #a3bf12; color: #fff; font: bold 10px/11px "DejaVu Sans", sans-serif; text-align: center; }
.rail { width: 9px; flex: none; background: #f2f2f2; padding-top: 34px; display: flex; flex-direction: column; align-items: end; }
.task-pane { position: relative; z-index: 1; width: 16px; display: grid; grid-auto-rows: 16px; border-left: 1px solid #999; border-top: 1px solid #999; }
.task-pane button { background: #ccc; border-bottom: 1px solid #999; justify-content: center; }
.task-pane .active { background: #fff; }
.task-pane svg { width: 13px; height: 13px; }
.canvas-bar { flex: 1; gap: 10px; }
.canvas-bar .thumb { height: 44px; }

/* sheet tabs and status */
.sheets { height: 12px; flex: none; display: flex; background: #eee; border-top: 1px solid #aaa; border-bottom: 1px solid #aaa; }
.sheet-nav { display: flex; color: #999; }
.sheet-nav button { width: 10px; background: #ccc; border-right: 1px solid #aaa; justify-content: center; }
.sheet { width: 25px; justify-content: center; background: #ddd; border-right: 1px solid #999; gap: 1px; }
.sheet.active { width: 46px; background: #f9f9f9; }
.sheet svg { width: 9px; height: 9px; }
.sheet-space { flex: 306; background: #f9f9f9; border-right: 2px solid #888; }
.hbar { flex: 423; display: flex; align-items: center; padding: 0 12px 0 8px; justify-content: space-between; background: #eee; }
.hbar .thumb { width: 87px; margin-left: -92px; line-height: 8px; font-size: 6px; text-align: center; background: linear-gradient(#fff, #ccc); border: 1px solid #999; }
.status { height: 13px; flex: none; display: flex; align-items: center; gap: 13px; padding-right: 4px; background: #ededed; }
.status p { flex: 1; white-space: nowrap; }
.status svg { width: 11px; height: 11px; }
.status .scale { margin-left: 6px; }
.status .custom { margin-left: 50px; }

/* desktop task bar */
.taskbar { height: 24px; flex: none; display: flex; align-items: center; color: #fff; background: linear-gradient(#537493, #21477a 3px, #1b3e70); border-radius: 0 0 4px 7px; overflow: hidden; }
.launch { width: 209px; display: flex; align-items: center; justify-content: space-between; padding: 0 10px 0 5px; }
.launch svg { width: 22px; height: 22px; }
.dots { width: 6px; height: 20px; background: radial-gradient(circle, #10284b 1px, transparent 1px) 0 0 / 3px 3px; }
.tasks { flex: 356; display: grid; grid-template-columns: repeat(4, 1fr); gap: 2px; height: 24px; }
.tasks button { min-width: 0; gap: 3px; padding-left: 5px; border: 1px solid #8296ae; border-radius: 2px; background: linear-gradient(#708aaa, #2b5286 50%, #325d8b); font-size: 8px; overflow: hidden; white-space: nowrap; }
.tasks .light { background: linear-gradient(90deg, #b7bfcb, #677fa0 40%, #31547f); }
.tasks svg { width: 21px; height: 21px; }
.sw { font: bold 11px "Liberation Sans", sans-serif; fill: #fff; }
.year { font: bold 7px "Liberation Sans", sans-serif; fill: #fff; stroke: #111; stroke-width: 2px; paint-order: stroke; }
.tray { width: 171px; display: flex; align-items: center; justify-content: space-between; padding-left: 7px; }
.tray svg { width: 12px; height: 12px; }
.taskbar time { width: 80px; text-align: center; font-size: 8px; line-height: 11px; }
.notice { width: 26px; padding-left: 6px; position: relative; }
.notice span { position: absolute; right: 2px; bottom: -3px; width: 8px; background: #e12f2c; font-size: 6px; line-height: 8px; text-align: center; }
.desktop { width: 7px; height: 24px; background: #5b7d9d; border-left: 1px solid #a3b9c9; }
```
